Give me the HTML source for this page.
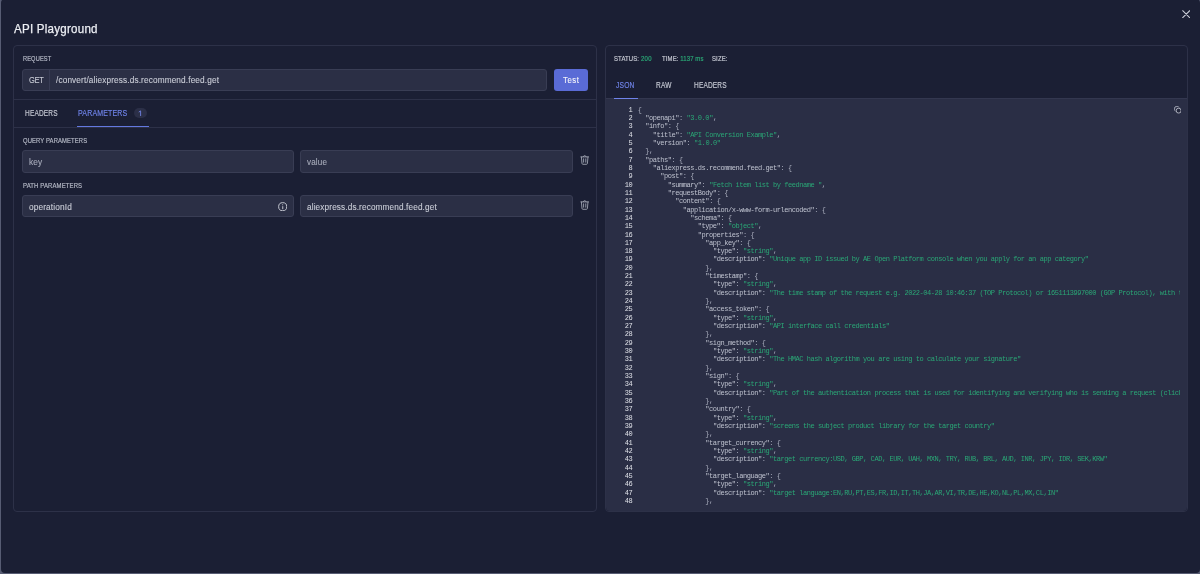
<!DOCTYPE html>
<html><head><meta charset="utf-8">
<style>
*{box-sizing:border-box;margin:0;padding:0}
html,body{width:1200px;height:574px;overflow:hidden;background:#575c73}
body{position:relative;font-family:"Liberation Sans",sans-serif}
#root{position:absolute;left:0;top:0;width:1200px;height:574px;will-change:transform}
.a{position:absolute;white-space:pre;line-height:1}
.sx{transform-origin:0 0}
.modal{position:absolute;left:1.3px;top:-1.3px;width:1199px;height:573.8px;background:#1b1f34;border-radius:4px}
.title{left:13.8px;top:23.2px;font-size:12.2px;color:#eceef3;letter-spacing:0.25px;-webkit-text-stroke:0.25px #eceef3;transform:scaleX(0.95);transform-origin:0 0}
.panel{position:absolute;border:1px solid #2d3148;border-radius:4px}
.lbl{font-size:7px;color:#b3b7c4;-webkit-text-stroke:0.2px currentColor}
.inp{position:absolute;background:#2b2f45;border:1px solid #393d54;border-radius:3px}
.itxt{font-size:9px;color:#c9ccd6;-webkit-text-stroke:0.12px currentColor}
.ph{color:#a6aab9}
.sep{position:absolute;height:1px;background:#2d3148}
.tab{font-size:8.2px;color:#c3c6d1;-webkit-text-stroke:0.18px currentColor}
.act{color:#6e82e6}
.grn{color:#2aa776}
.code{position:absolute;left:605.75px;top:98.2px;width:581.5px;height:413.3px;background:#2a2e45;border-top:1px solid #33374f;border-radius:0 0 4px 4px;overflow:hidden}
.nums{position:absolute;left:0;top:6.4px;width:26.5px;text-align:right;font-family:"Liberation Mono",monospace;font-size:7px;line-height:8.335px;letter-spacing:-0.445px;color:#dee0e7;white-space:pre}
.src{position:absolute;left:32px;top:6.4px;width:542.7px;overflow:hidden;font-family:"Liberation Mono",monospace;font-size:7px;line-height:8.335px;letter-spacing:-0.445px;color:#a9adbd;white-space:pre}
.k{color:#bec2cf}
.s{color:#2aa776}
</style></head><body><div id="root">
<div class="modal"></div>
<div class="a title">API Playground</div>
<svg class="a" style="left:1181.6px;top:9.9px" width="8.4" height="8.4" viewBox="0 0 8.4 8.4"><path d="M0.7 0.7L7.7 7.7M7.7 0.7L0.7 7.7" stroke="#c9ccd6" stroke-width="1.05" stroke-linecap="round"/></svg>

<!-- left panel -->
<div class="panel" style="left:13.4px;top:45.4px;width:583.4px;height:466.2px"></div>
<div class="a lbl sx" style="left:22.7px;top:55.8px;font-size:7.1px;letter-spacing:0.15px;transform:scaleX(0.8)">REQUEST</div>
<div class="inp" style="left:22px;top:69px;width:524.6px;height:22px"></div>
<div class="a" style="left:49px;top:70px;width:1px;height:20px;background:#383c54"></div>
<div class="a itxt sx" style="left:28.6px;top:75.6px;font-size:8.3px;letter-spacing:-0.3px;transform:scaleX(0.9);-webkit-text-stroke:0.1px currentColor">GET</div>
<div class="a itxt sx" style="left:56.2px;top:75.8px;letter-spacing:0.15px;transform:scaleX(0.915)">/convert/aliexpress.ds.recommend.feed.get</div>
<div class="a" style="left:554.2px;top:69px;width:33.8px;height:22px;background:#5a6bd6;border-radius:3px"></div>
<div class="a sx" style="left:562.9px;top:75.9px;font-size:8.4px;color:#f4f5fa;letter-spacing:0.55px;-webkit-text-stroke:0.12px #f4f5fa;transform:scaleX(0.93)">Test</div>
<div class="sep" style="left:14.4px;top:98.6px;width:581.4px"></div>
<div class="sep" style="left:14.4px;top:126.8px;width:581.4px"></div>
<div class="a tab sx" style="left:24.6px;top:109.8px;letter-spacing:0.2px;transform:scaleX(0.8)">HEADERS</div>
<div class="a tab act sx" style="left:77.8px;top:109.8px;letter-spacing:0.2px;transform:scaleX(0.855)">PARAMETERS</div>
<div class="a" style="left:133.8px;top:107.8px;width:13px;height:10.4px;border-radius:6px;background:#2b2f47"></div>
<svg class="a" style="left:138px;top:110px" width="5" height="6.5" viewBox="0 0 5 6.5"><path d="M1.1 1.9L2.6 0.9V5.6" fill="none" stroke="#7083e4" stroke-width="0.9" stroke-linecap="round" stroke-linejoin="round"/></svg>
<div class="a" style="left:77px;top:125.9px;width:72px;height:1.6px;background:#6378e0"></div>

<div class="a lbl sx" style="left:22.8px;top:137.8px;font-size:7.1px;letter-spacing:0.15px;transform:scaleX(0.826)">QUERY PARAMETERS</div>
<div class="inp" style="left:22px;top:150.2px;width:272px;height:22.4px"></div>
<div class="a itxt ph sx" style="left:29px;top:158.2px;letter-spacing:0.15px;transform:scaleX(0.92)">key</div>
<div class="inp" style="left:300px;top:150.2px;width:273px;height:22.4px"></div>
<div class="a itxt ph sx" style="left:307px;top:158.2px;letter-spacing:0.15px;transform:scaleX(0.9)">value</div>
<svg class="a" style="left:580px;top:154.4px" width="9.4" height="11" viewBox="0 0 9.4 11"><path d="M3.1 2.5Q4.7 0.4 6.3 2.5M0.9 2.9H8.5M1.4 3L2 9.5Q2.15 10.3 2.9 10.3H6.5Q7.25 10.3 7.4 9.5L8 3M3.6 4.8V8.2M5.8 4.8V8.2" fill="none" stroke="#a9adbb" stroke-width="0.85" stroke-linecap="round" stroke-linejoin="round"/></svg>

<div class="a lbl sx" style="left:22.8px;top:182.8px;font-size:7.1px;letter-spacing:0.15px;transform:scaleX(0.84)">PATH PARAMETERS</div>
<div class="inp" style="left:22px;top:195px;width:272px;height:22.4px"></div>
<div class="a itxt sx" style="left:28.9px;top:202.7px;letter-spacing:0.15px;transform:scaleX(0.92)">operationId</div>
<svg class="a" style="left:277.9px;top:201.6px" width="9.4" height="9.4" viewBox="0 0 9.4 9.4"><circle cx="4.7" cy="4.7" r="4.05" fill="none" stroke="#c9ccd6" stroke-width="0.95"/><path d="M4.75 4.6v2.2" stroke="#c9ccd6" stroke-width="0.95" stroke-linecap="round"/><circle cx="4.65" cy="2.75" r="0.55" fill="#c9ccd6"/></svg>
<div class="inp" style="left:300px;top:195px;width:273px;height:22.4px"></div>
<div class="a itxt sx" style="left:306.9px;top:202.7px;letter-spacing:0.15px;transform:scaleX(0.912)">aliexpress.ds.recommend.feed.get</div>
<svg class="a" style="left:580px;top:199.4px" width="9.4" height="11" viewBox="0 0 9.4 11"><path d="M3.1 2.5Q4.7 0.4 6.3 2.5M0.9 2.9H8.5M1.4 3L2 9.5Q2.15 10.3 2.9 10.3H6.5Q7.25 10.3 7.4 9.5L8 3M3.6 4.8V8.2M5.8 4.8V8.2" fill="none" stroke="#a9adbb" stroke-width="0.85" stroke-linecap="round" stroke-linejoin="round"/></svg>

<!-- right panel -->
<div class="panel" style="left:605.3px;top:45.3px;width:582.5px;height:466.5px"></div>
<div class="a lbl sx" style="left:613.9px;top:55.1px;color:#c5c8d2;letter-spacing:0.15px;transform:scaleX(0.85)">STATUS: <span class="grn" style="letter-spacing:0.45px">200</span></div>
<div class="a lbl sx" style="left:661.9px;top:55.1px;color:#c5c8d2;letter-spacing:0.15px;transform:scaleX(0.85)">TIME: <span class="grn">1137 ms</span></div>
<div class="a lbl sx" style="left:712px;top:55.1px;color:#c5c8d2;letter-spacing:0.15px;transform:scaleX(0.85)">SIZE:</div>
<div class="a tab act sx" style="left:616px;top:81.7px;letter-spacing:0.2px;transform:scaleX(0.82)">JSON</div>
<div class="a tab sx" style="left:656.3px;top:81.7px;letter-spacing:0.2px;transform:scaleX(0.8)">RAW</div>
<div class="a tab sx" style="left:693.9px;top:81.7px;letter-spacing:0.2px;transform:scaleX(0.8)">HEADERS</div>
<div class="code">
<div class="nums">1
2
3
4
5
6
7
8
9
10
11
12
13
14
15
16
17
18
19
20
21
22
23
24
25
26
27
28
29
30
31
32
33
34
35
36
37
38
39
40
41
42
43
44
45
46
47
48</div>
<div class="src">{
  <span class="k">&quot;openapi&quot;</span>: <span class="s">&quot;3.0.0&quot;</span>,
  <span class="k">&quot;info&quot;</span>: {
    <span class="k">&quot;title&quot;</span>: <span class="s">&quot;API Conversion Example&quot;</span>,
    <span class="k">&quot;version&quot;</span>: <span class="s">&quot;1.0.0&quot;</span>
  },
  <span class="k">&quot;paths&quot;</span>: {
    <span class="k">&quot;aliexpress.ds.recommend.feed.get&quot;</span>: {
      <span class="k">&quot;post&quot;</span>: {
        <span class="k">&quot;summary&quot;</span>: <span class="s">&quot;Fetch item list by feedname &quot;</span>,
        <span class="k">&quot;requestBody&quot;</span>: {
          <span class="k">&quot;content&quot;</span>: {
            <span class="k">&quot;application/x-www-form-urlencoded&quot;</span>: {
              <span class="k">&quot;schema&quot;</span>: {
                <span class="k">&quot;type&quot;</span>: <span class="s">&quot;object&quot;</span>,
                <span class="k">&quot;properties&quot;</span>: {
                  <span class="k">&quot;app_key&quot;</span>: {
                    <span class="k">&quot;type&quot;</span>: <span class="s">&quot;string&quot;</span>,
                    <span class="k">&quot;description&quot;</span>: <span class="s">&quot;Unique app ID issued by AE Open Platform console when you apply for an app category&quot;</span>
                  },
                  <span class="k">&quot;timestamp&quot;</span>: {
                    <span class="k">&quot;type&quot;</span>: <span class="s">&quot;string&quot;</span>,
                    <span class="k">&quot;description&quot;</span>: <span class="s">&quot;The time stamp of the request e.g. 2022-04-28 10:46:37 (TOP Protocol) or 1651113997000 (GOP Protocol), with the time zone difference&quot;</span>
                  },
                  <span class="k">&quot;access_token&quot;</span>: {
                    <span class="k">&quot;type&quot;</span>: <span class="s">&quot;string&quot;</span>,
                    <span class="k">&quot;description&quot;</span>: <span class="s">&quot;API interface call credentials&quot;</span>
                  },
                  <span class="k">&quot;sign_method&quot;</span>: {
                    <span class="k">&quot;type&quot;</span>: <span class="s">&quot;string&quot;</span>,
                    <span class="k">&quot;description&quot;</span>: <span class="s">&quot;The HMAC hash algorithm you are using to calculate your signature&quot;</span>
                  },
                  <span class="k">&quot;sign&quot;</span>: {
                    <span class="k">&quot;type&quot;</span>: <span class="s">&quot;string&quot;</span>,
                    <span class="k">&quot;description&quot;</span>: <span class="s">&quot;Part of the authentication process that is used for identifying and verifying who is sending a request (click here for details)&quot;</span>
                  },
                  <span class="k">&quot;country&quot;</span>: {
                    <span class="k">&quot;type&quot;</span>: <span class="s">&quot;string&quot;</span>,
                    <span class="k">&quot;description&quot;</span>: <span class="s">&quot;screens the subject product library for the target country&quot;</span>
                  },
                  <span class="k">&quot;target_currency&quot;</span>: {
                    <span class="k">&quot;type&quot;</span>: <span class="s">&quot;string&quot;</span>,
                    <span class="k">&quot;description&quot;</span>: <span class="s">&quot;target currency:USD, GBP, CAD, EUR, UAH, MXN, TRY, RUB, BRL, AUD, INR, JPY, IDR, SEK,KRW&quot;</span>
                  },
                  <span class="k">&quot;target_language&quot;</span>: {
                    <span class="k">&quot;type&quot;</span>: <span class="s">&quot;string&quot;</span>,
                    <span class="k">&quot;description&quot;</span>: <span class="s">&quot;target language:EN,RU,PT,ES,FR,ID,IT,TH,JA,AR,VI,TR,DE,HE,KO,NL,PL,MX,CL,IN&quot;</span>
                  },</div>
<svg class="a" style="left:567.9px;top:6.8px" width="7.6" height="7.6" viewBox="0 0 7.6 7.6"><rect x="2.3" y="2.3" width="4.7" height="4.7" rx="2" fill="#24283d" stroke="#c2c5d0" stroke-width="0.85"/><path d="M5.1 1.4A1.5 1.5 0 0 0 3.9.6H2.1A1.5 1.5 0 0 0 .6 2.1v1.8a1.5 1.5 0 0 0 .8 1.2" fill="none" stroke="#b4b8c4" stroke-width="0.85"/></svg>
</div>
<div class="a" style="left:613.7px;top:97.8px;width:24px;height:1.4px;background:#6f83ea"></div>
</div></body></html>
